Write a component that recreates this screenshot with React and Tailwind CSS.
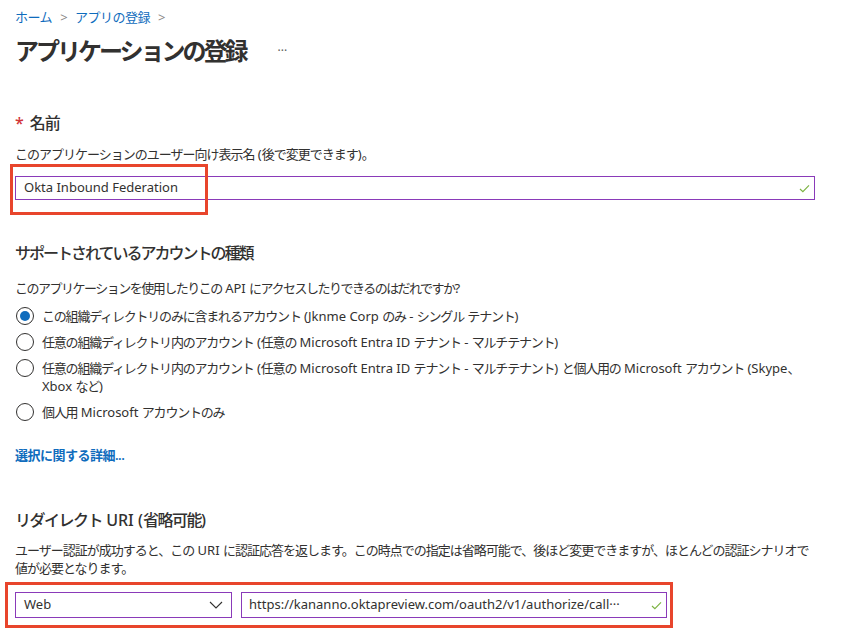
const font = { fontFamily: '"Noto Sans", "Noto Sans CJK JP", sans-serif' };

// CJK runs are set tighter than Latin, as in the narrow Japanese UI font of the original
const J = ({ text, tight }) =>
  text.split(/([\u3000-\u30ff\u4e00-\u9fff\uff00-\uffef]+)/).map((part, i) =>
    i % 2 === 1 ? (
      <span key={i} className={tight}>
        {part}
      </span>
    ) : (
      <span key={i}>{part}</span>
    )
  );

const Check = ({ className }) => (
  <svg viewBox="0 0 12 10" className={className} fill="none" stroke="#7cb342" strokeWidth="1.3">
    <path d="M1 5.5 L4.2 8.5 L11 1.5" />
  </svg>
);

const Radio = ({ checked }) => (
  <span className="flex h-[18px] w-[18px] shrink-0 items-center justify-center rounded-full border border-[#323130] bg-white">
    {checked && <span className="h-[10px] w-[10px] rounded-full bg-[#0f6cbd]" />}
  </span>
);

const options = [
  { label: "この組織ディレクトリのみに含まれるアカウント (Jknme Corp のみ - シングル テナント)", checked: true },
  { label: "任意の組織ディレクトリ内のアカウント (任意の Microsoft Entra ID テナント - マルチテナント)" },
  { label: "任意の組織ディレクトリ内のアカウント (任意の Microsoft Entra ID テナント - マルチテナント) と個人用の Microsoft アカウント (Skype、Xbox など)" },
  { label: "個人用 Microsoft アカウントのみ" },
];

export default function App() {
  return (
    <div className="min-h-[643px] w-[867px] bg-white px-[15px] text-[#323130]" style={font}>
      <nav className="flex items-center gap-[8px] pt-[8px] text-[13px] leading-[18px] tracking-[-0.5px] text-[#0f6cbd]">
        <span>ホーム</span>
        <span className="text-[#8a8886]">&gt;</span>
        <span>アプリの登録</span>
        <span className="text-[#8a8886]">&gt;</span>
      </nav>
      <div className="mt-[9px] flex items-center">
        <h1 className="text-[24px] font-semibold leading-[32px] tracking-[-3px]">アプリケーションの登録</h1>
        <span className="ml-[32px] text-[12px] text-[#605e5c]">···</span>
      </div>

      <h2 className="mt-[45px] text-[16px] font-medium leading-[22px] tracking-[-1px]">
        <span className="mr-[7px] text-[#d13438]">*</span>名前
      </h2>
      <p className="mt-[10px] text-[13px] leading-[20px]">
        <J text="このアプリケーションのユーザー向け表示名 (後で変更できます)。" tight="tracking-[-1px]" />
      </p>
      <div className="relative mt-[12px]">
        <div className="flex h-[24px] w-[800px] items-center border border-[#8a3ab9] pl-[8px] pr-[4px] text-[13px]">
          <span className="flex-1">Okta Inbound Federation</span>
          <Check className="h-[9px] w-[11px]" />
        </div>
        <div className="pointer-events-none absolute left-[-5px] top-[-12px] h-[51px] w-[198px] border-[3px] border-[#e8452c]" />
      </div>

      <h2 className="mt-[42px] text-[16px] font-medium leading-[22px] tracking-[-2px]">サポートされているアカウントの種類</h2>
      <p className="mt-[14px] text-[13px] leading-[20px]">
        <J text="このアプリケーションを使用したりこの API にアクセスしたりできるのはだれですか?" tight="tracking-[-1.5px]" />
      </p>
      <div className="mt-[9px] flex flex-col gap-[8px]">
        {options.map((o) => (
          <label key={o.label} className="flex items-start gap-[8px] pl-[1px] text-[13px] leading-[18px]">
            <Radio checked={o.checked} />
            <span className="max-w-[778px]">
              <J text={o.label} tight="tracking-[-1.2px]" />
            </span>
          </label>
        ))}
      </div>

      <a className="mt-[24px] block text-[13px] font-semibold leading-[20px] tracking-[-0.5px] text-[#0f6cbd]">選択に関する詳細...</a>

      <h2 className="mt-[44px] text-[16px] font-medium leading-[22px]">
        <J text="リダイレクト URI (省略可能)" tight="tracking-[-1.5px]" />
      </h2>
      <p className="mt-[10px] max-w-[805px] text-[13px] leading-[18px]">
        <J
          text="ユーザー認証が成功すると、この URI に認証応答を返します。この時点での指定は省略可能で、後ほど変更できますが、ほとんどの認証シナリオで値が必要となります。"
          tight="tracking-[-1px]"
        />
      </p>
      <div className="relative mt-[15px] flex gap-[9px]">
        <div className="flex h-[26px] w-[217px] items-center justify-between border border-[#8a3ab9] pl-[8px] pr-[8px] text-[13px]">
          <span>Web</span>
          <svg viewBox="0 0 14 8" className="h-[8px] w-[14px]" fill="none" stroke="#323130" strokeWidth="1.1">
            <path d="M1 1 L7 7 L13 1" />
          </svg>
        </div>
        <div className="flex h-[26px] w-[426px] items-center border border-[#8a3ab9] pl-[7px] pr-[4px] text-[13px]">
          <span className="flex-1 truncate">https://kananno.oktapreview.com/oauth2/v1/authorize/call···</span>
          <Check className="ml-[2px] h-[9px] w-[11px]" />
        </div>
        <div className="pointer-events-none absolute left-[-10px] top-[-10px] h-[46px] w-[668px] border-[3px] border-[#e8452c]" />
      </div>
    </div>
  );
}
